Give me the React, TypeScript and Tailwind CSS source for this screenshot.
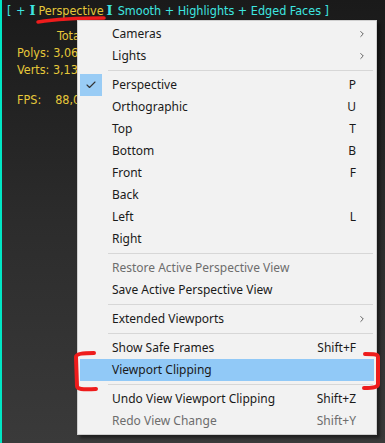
import { Check, ChevronRight } from 'lucide-react';

type Item = {
  label?: string;
  key?: string;
  sub?: boolean;
  checked?: boolean;
  disabled?: boolean;
  active?: boolean;
  sep?: boolean;
};

const items: Item[] = [
  { label: 'Cameras', sub: true },
  { label: 'Lights', sub: true },
  { sep: true },
  { label: 'Perspective', key: 'P', checked: true },
  { label: 'Orthographic', key: 'U' },
  { label: 'Top', key: 'T' },
  { label: 'Bottom', key: 'B' },
  { label: 'Front', key: 'F' },
  { label: 'Back' },
  { label: 'Left', key: 'L' },
  { label: 'Right' },
  { sep: true },
  { label: 'Restore Active Perspective View', disabled: true },
  { label: 'Save Active Perspective View' },
  { sep: true },
  { label: 'Extended Viewports', sub: true },
  { sep: true },
  { label: 'Show Safe Frames', key: 'Shift+F' },
  { label: 'Viewport Clipping', active: true },
  { sep: true },
  { label: 'Undo View Viewport Clipping', key: 'Shift+Z' },
  { label: 'Redo View Change', key: 'Shift+Y', disabled: true },
];

function MenuRow({ item }: { item: Item }) {
  if (item.sep) {
    return <div className="ml-[30px] mr-[3px] my-[3px] h-px bg-[#d7d7d7]" />;
  }
  return (
    <div
      className={`flex items-center h-[22px] mx-[2px] ${item.active ? 'bg-[#91c9f7]' : ''} ${
        item.disabled ? 'text-[#6d6d6d]' : 'text-[#1a1a1a]'
      }`}
    >
      <div className="w-[22px] h-[22px] flex items-center justify-center">
        {item.checked && (
          <div className="w-[22px] h-[22px] bg-[#99ccf5] flex items-center justify-center">
            <Check className="w-[12px] h-[12px] text-[#333]" strokeWidth={2.2} />
          </div>
        )}
      </div>
      <span className="ml-[10px] flex-1">{item.label}</span>
      {item.key && <span className="w-[60px] text-right pr-[18px]">{item.key}</span>}
      {item.sub && (
        <span className="w-[30px] flex justify-end pr-[7px]">
          <ChevronRight className="w-[10px] h-[10px] text-[#444]" strokeWidth={2} />
        </span>
      )}
    </div>
  );
}

function Beam() {
  return (
    <b className="mx-[3px] text-[13px]" style={{ fontFamily: '"DejaVu Serif", serif' }}>
      I
    </b>
  );
}

export default function App() {
  const hud = { fontFamily: '"DejaVu Sans Condensed", "DejaVu Sans", sans-serif' };
  return (
    <div className="relative w-[385px] h-[443px] overflow-hidden bg-gradient-to-b from-[#1a1a1a] via-[#2c2c2c] to-[#3a3a3a] border-l-2 border-[#00e6c4]">
      {/* viewport label */}
      <div className="pl-[5px] pt-[1px] text-[12.5px] text-[#3ee6e0] whitespace-nowrap" style={hud}>
        [ <span className="mx-[1px]">+</span>
        <Beam />
        <span className="text-[#e6c83a]">Perspective</span>
        <Beam />
        <span className="ml-[2px]">Smooth + Highlights + Edged Faces ]</span>
      </div>

      {/* stats */}
      <div className="mt-[6px] pl-[15px] text-[12.5px] leading-[17px] text-[#e6c83a]" style={hud}>
        <div className="pl-[40px]">Total</div>
        <div>Polys: 3,068</div>
        <div>Verts: 3,134</div>
        <div className="mt-[13px]">
          FPS:<span className="ml-[14px]">88,012</span>
        </div>
      </div>

      {/* red underline */}
      <svg className="absolute left-[30px] top-[14px]" width="80" height="12">
        <path d="M6 8 C 25 5, 50 4, 72 4" stroke="#ee1c1c" strokeWidth="3.5" fill="none" strokeLinecap="round" />
      </svg>

      {/* context menu */}
      <div
        className="absolute left-[75px] top-[20px] w-[300px] bg-[#f2f2f2] border border-[#cfcfcf] py-[2px] text-[12px] shadow-[3px_3px_3px_rgba(0,0,0,0.45)]"
        style={{ fontFamily: '"Noto Sans", "Open Sans", sans-serif' }}
      >
        {items.map((it, i) => (
          <MenuRow key={i} item={it} />
        ))}
      </div>

      {/* red brackets */}
      <svg className="absolute left-[62px] top-[348px]" width="40" height="48">
        <path d="M30 5 C 18 5, 12 6, 12 9 L 13 38 C 13 41, 18 42, 32 41" stroke="#ee1c1c" strokeWidth="4" fill="none" strokeLinecap="round" />
      </svg>
      <svg className="absolute left-[350px] top-[348px]" width="34" height="48">
        <path d="M13 6 C 22 6, 26 6, 26 9 L 26 36 C 26 39, 22 40, 12 40" stroke="#ee1c1c" strokeWidth="4" fill="none" strokeLinecap="round" />
      </svg>
    </div>
  );
}
